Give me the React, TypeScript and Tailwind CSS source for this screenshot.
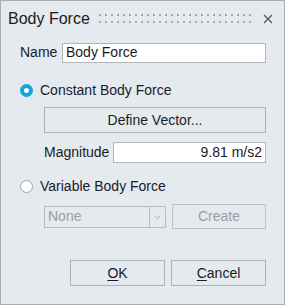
import React from 'react';

const font = { fontFamily: '"Liberation Sans", Arial, sans-serif' };

function Radio({ checked }: { checked?: boolean }) {
  return checked ? (
    <span className="flex h-[13px] w-[13px] items-center justify-center rounded-full bg-[#16a3e0]">
      <span className="h-[5px] w-[5px] rounded-full bg-white" />
    </span>
  ) : (
    <span className="h-[13px] w-[13px] rounded-full border border-[#9ea3a8] bg-white" />
  );
}

export default function App() {
  return (
    <div
      className="flex h-[305px] w-[285px] flex-col border border-[#a9aeb3] bg-[#e4eaee] text-[14px] text-[#1b1b2b]"
      style={font}
    >
      {/* Title bar */}
      <div className="flex h-[33px] items-center pl-[7px] pr-[11px] pt-[2px]">
        <span className="text-[16px] text-[#1a1a1a]">Body Force</span>
        <div className="ml-auto mr-[8px] flex w-[156px] flex-col gap-[5px]">
          <div className="h-[2px] w-full bg-[linear-gradient(to_right,#a3a8ad_2px,transparent_2px)] bg-[length:6px_2px]" />
          <div className="h-[2px] w-full bg-[linear-gradient(to_right,#a3a8ad_2px,transparent_2px)] bg-[length:6px_2px]" />
        </div>
        <svg width="10" height="10" viewBox="0 0 10 10" className="text-[#555]">
          <path d="M1 1 L9 9 M9 1 L1 9" stroke="currentColor" strokeWidth="1.3" />
        </svg>
      </div>

      {/* Name */}
      <div className="mt-[8px] flex items-center pl-[19px] pr-[18px]">
        <span className="w-[42px]">Name</span>
        <input
          readOnly
          value="Body Force"
          className="h-[20px] min-w-0 flex-1 border border-[#b2b6ba] bg-white px-[3px] text-[14px] text-[#1a1a1a] outline-none"
          style={font}
        />
      </div>

      {/* Constant */}
      <div className="mt-[17px] flex items-center gap-[7px] pl-[19px]">
        <Radio checked />
        <span>Constant Body Force</span>
      </div>
      <div className="mt-[6px] flex flex-col gap-[9px] pl-[43px] pr-[18px]">
        <button className="h-[26px] w-full border border-[#adb2b6] bg-[#e4eaee] text-[14px]" style={font}>
          Define Vector...
        </button>
        <div className="flex items-center">
          <span className="w-[69px]">Magnitude</span>
          <input
            readOnly
            value="9.81 m/s2"
            className="h-[21px] min-w-0 flex-1 border border-[#b2b6ba] bg-white px-[3px] text-right text-[14px] text-[#1a1a1a] outline-none"
            style={font}
          />
        </div>
      </div>

      {/* Variable */}
      <div className="mt-[13px] flex items-center gap-[7px] pl-[19px]">
        <Radio />
        <span>Variable Body Force</span>
      </div>
      <div className="mt-[7px] flex items-center gap-[6px] pl-[43px] pr-[18px]">
        <div className="flex h-[22px] w-[122px] border border-[#b8bcc0]">
          <div className="flex flex-1 items-center bg-[#e4eaee] px-[3px] text-[#9a9ea2]">None</div>
          <div className="flex w-[16px] items-center justify-center border-l border-[#b8bcc0]">
            <svg width="7" height="4" viewBox="0 0 7 4">
              <path d="M0.5 0.5 L3.5 3.5 L6.5 0.5" stroke="#b0b4b8" fill="none" />
            </svg>
          </div>
        </div>
        <button
          className="h-[25px] flex-1 border border-[#bfc3c7] bg-[#e4eaee] text-[14px] text-[#9a9ea2]"
          style={font}
        >
          Create
        </button>
      </div>

      {/* Footer */}
      <div className="mt-auto mb-[18px] flex justify-end gap-[6px] pr-[18px]">
        <button className="h-[26px] w-[95px] border border-[#adb2b6] bg-[#e4eaee] text-[14px]" style={font}>
          <span className="underline underline-offset-2">O</span>K
        </button>
        <button className="h-[26px] w-[95px] border border-[#adb2b6] bg-[#e4eaee] text-[14px]" style={font}>
          <span className="underline underline-offset-2">C</span>ancel
        </button>
      </div>
    </div>
  );
}
